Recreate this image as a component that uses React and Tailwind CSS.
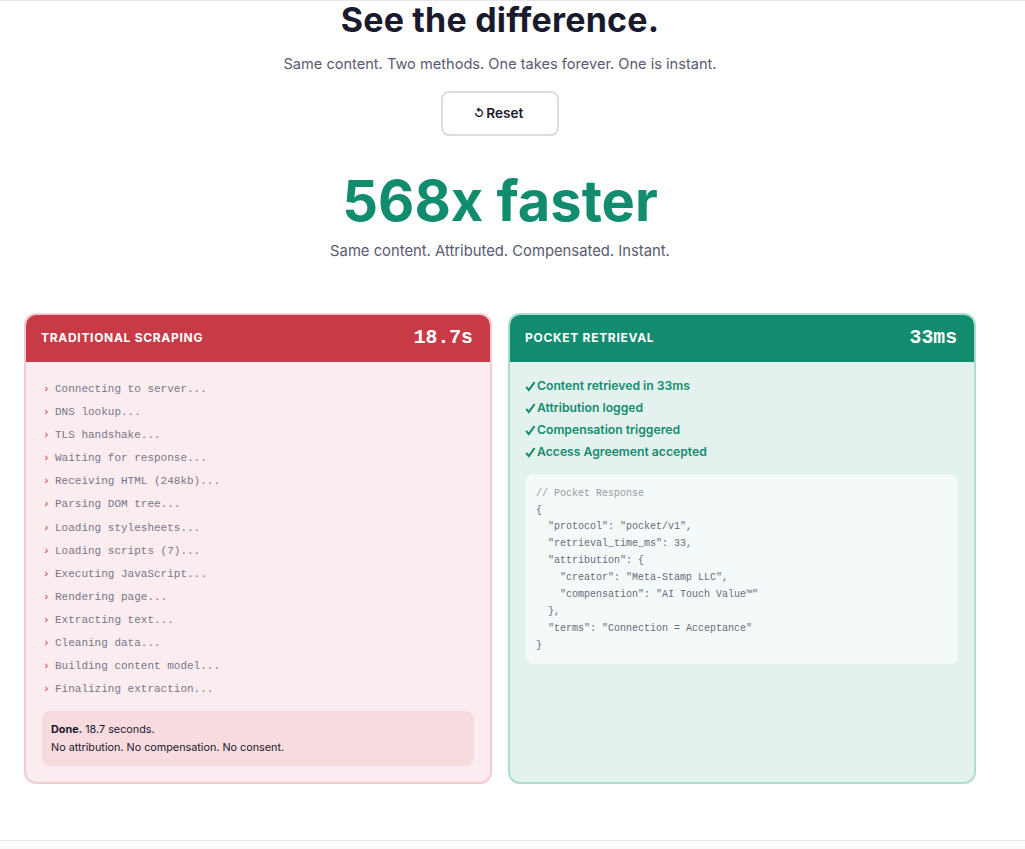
import { useState } from "react";

const steps = [
  "Connecting to server...",
  "DNS lookup...",
  "TLS handshake...",
  "Waiting for response...",
  "Receiving HTML (248kb)...",
  "Parsing DOM tree...",
  "Loading stylesheets...",
  "Loading scripts (7)...",
  "Executing JavaScript...",
  "Rendering page...",
  "Extracting text...",
  "Cleaning data...",
  "Building content model...",
  "Finalizing extraction...",
];

const checks = [
  "Content retrieved in 33ms",
  "Attribution logged",
  "Compensation triggered",
  "Access Agreement accepted",
];

const code = `{
  "protocol": "pocket/v1",
  "retrieval_time_ms": 33,
  "attribution": {
    "creator": "Meta-Stamp LLC",
    "compensation": "AI Touch Value™"
  },
  "terms": "Connection = Acceptance"
}`;

function CardHeader({ title, time, color }) {
  return (
    <div className={`flex justify-between items-center h-[47px] pl-[15px] pr-[17px] text-white ${color}`}>
      <span className="pb-[2px] text-[12px] font-bold tracking-[0.7px]">{title}</span>
      <span className="font-['Liberation_Mono',monospace] text-[19.8px] font-bold">{time}</span>
    </div>
  );
}

function App() {
  const [runs, setRuns] = useState(0);

  return (
    <div className="h-[849px] overflow-hidden flex flex-col bg-white font-['Inter',sans-serif] text-[#1a1a2e] border-t border-[#e5e7eb]">
      <div className="w-[1000px] flex-1 px-6">
        <div className="flex flex-col items-center">
          <h2 className="text-[34px] leading-[38px] font-bold tracking-[0.2px]">See the difference.</h2>
          <p className="mt-[15px] text-[14.6px] leading-[20px] text-[#5a5a72]">
            Same content. Two methods. One takes forever. One is instant.
          </p>
          <button
            onClick={() => setRuns(runs + 1)}
            className="mt-[17px] w-[118px] h-[45px] pr-[3px] flex items-center justify-center gap-[2px] rounded-[8px] border-2 border-[#dddddd] bg-white text-[13.6px] font-semibold"
          >
            <span className="text-[11px] font-bold">↺</span> Reset
          </button>
          <div className="mt-[27px] text-[56px] leading-[76px] font-bold text-[#128c6e]">568x faster</div>
          <p className="mt-[2px] text-[14.8px] leading-[20px] text-[#5a5a72]">
            Same content. Attributed. Compensated. Instant.
          </p>
        </div>

        <div className="mt-[52px] grid grid-cols-2 gap-4">
          <div className="h-[471px] rounded-[12px] border-2 border-[#f2ccd2] bg-[#fbecef] overflow-hidden flex flex-col">
            <CardHeader title="TRADITIONAL SCRAPING" time="18.7s" color="bg-[#c93a47]" />
            <div className="flex-1 px-[16px] pt-[16px]">
              <ul className="font-['Liberation_Mono',monospace] text-[11px] leading-[23.1px] text-[#77778a]">
                {steps.map((step) => (
                  <li key={step} className="flex pl-[1px]">
                    <span className="w-[12px] text-[#c93a47]">›</span>
                    {step}
                  </li>
                ))}
              </ul>
              <div className="mt-[9.6px] h-[55px] rounded-[8px] bg-[#f8dbdf] px-[9px] pt-[10px] text-[10.8px] leading-[18px]">
                <p><strong className="font-bold">Done.</strong> 18.7 seconds.</p>
                <p>No attribution. No compensation. No consent.</p>
              </div>
            </div>
          </div>

          <div className="h-[471px] rounded-[12px] border-2 border-[#aedccd] bg-[#e3f2ee] overflow-hidden flex flex-col">
            <CardHeader title="POCKET RETRIEVAL" time="33ms" color="bg-[#128c6e]" />
            <div className="flex-1 px-[15px] pt-[13px]">
              <ul className="text-[12.2px] leading-[22px] font-semibold text-[#128c6e]">
                {checks.map((check) => (
                  <li key={check} className="flex items-center gap-[1px]">
                    <svg viewBox="0 0 11 11" className="w-[11px] h-[11px]" fill="none" stroke="currentColor" strokeWidth="2">
                      <path d="M1.2 5.8 L3.8 9.2 L9.6 1.2" />
                    </svg>
                    {check}
                  </li>
                ))}
              </ul>
              <pre className="mt-[11px] mx-[1px] h-[190px] rounded-[8px] bg-[#f4f9f9] px-[10px] pt-[11.6px] font-['Liberation_Mono',monospace] text-[10px] leading-[16.9px] text-[#6a6a7a]">
                <span className="text-[#9a9aa5]">// Pocket Response</span>
                {"\n"}
                {code}
              </pre>
            </div>
          </div>
        </div>
      </div>
      <div className="h-[9px] bg-[#f9fafb] border-t border-[#e5e7eb]" />
    </div>
  );
}

export default App;
